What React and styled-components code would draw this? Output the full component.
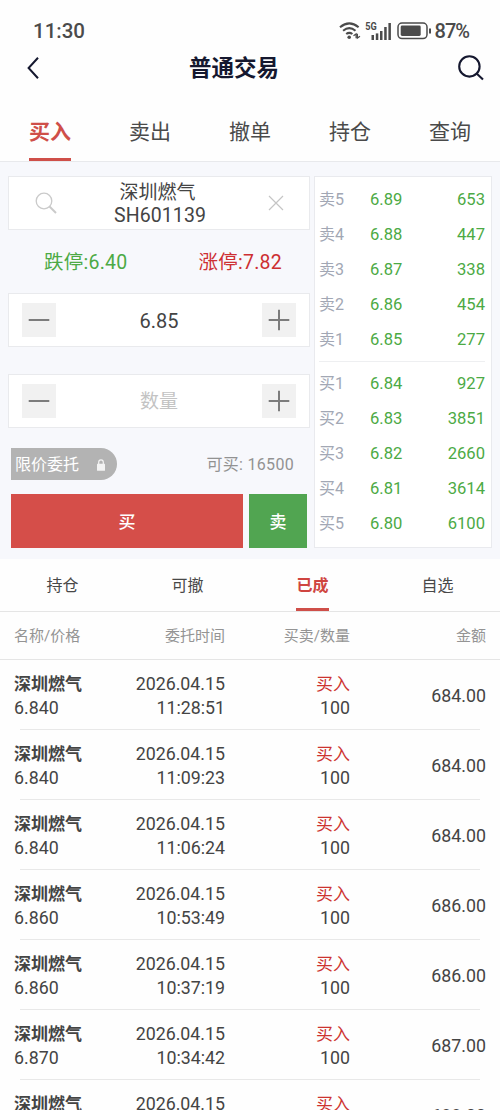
import React, { useState } from "react";
import styled, { createGlobalStyle } from "styled-components";

const GlobalStyle = createGlobalStyle`
  * { box-sizing: border-box; }
  body {
    margin: 0;
    background: #fff;
    color: #444;
    font-family: Roboto, "Noto Sans CJK SC", sans-serif;
  }
  button {
    border: 0;
    padding: 0;
    background: none;
    color: inherit;
    font: inherit;
  }
`;

const Screen = styled.div`
  width: 500px;
  height: 1110px;
  overflow: hidden;
  background: #fefefe;
`;

const StatusBar = styled.div`
  display: flex;
  align-items: center;
  justify-content: space-between;
  height: 46px;
  padding: 15px 31px 0 33px;
  font-size: 20px;
  line-height: 30px;
  font-weight: 500;
  color: #4b4b4b;
`;

const Clock = styled.span`
  font-size: 20.5px;
`;

const StatusIcons = styled.div`
  display: flex;
  align-items: center;
`;

const Percent = styled.span`
  margin-left: 3px;
  font-size: 20px;
  letter-spacing: -1px;
`;

const Header = styled.header`
  display: grid;
  grid-template-columns: 60px 348px 1fr;
  align-items: center;
  height: 44px;
  padding: 0 16px 0 0;
  color: #15182f;
`;

const HeaderButton = styled.button`
  display: flex;
  justify-content: flex-end;
  padding-right: ${props => (props.$back ? 18 : 0)}px;
`;

const Title = styled.h1`
  margin: 0;
  padding-top: 1px;
  text-align: center;
  font-size: 22.5px;
  line-height: 33px;
  font-weight: 700;
`;

const MainTabs = styled.nav`
  display: grid;
  grid-template-columns: repeat(5, 100px);
  height: 72px;
  border-bottom: 1px solid #e8e9ec;
`;

const MainTab = styled.button`
  justify-self: center;
  height: 71px;
  padding-top: 25px;
  border-bottom: 3px solid ${props => (props.$active ? "#cf4f49" : "transparent")};
  color: ${props => (props.$active ? "#cf4f49" : "#4a4a4a")};
  font-size: 21px;
  line-height: 34px;
  font-weight: ${props => (props.$active ? 700 : 400)};
  display: flex;
  align-items: flex-start;
`;

const Trade = styled.section`
  display: flex;
  gap: 4px;
  height: 397px;
  padding: 14px 8px 11px;
  background: #f7f8fc;
`;

const Form = styled.div`
  width: 302px;
`;

const Field = styled.div`
  display: flex;
  align-items: center;
  justify-content: space-between;
  height: 54px;
  margin-bottom: ${props => props.$gap || 0}px;
  padding: ${props => props.$pad || "0 13px"};
  border: 1px solid #e9eaed;
  background: #fff;
`;

const Stock = styled.div`
  display: flex;
  flex-direction: column;
  align-items: center;
  margin-right: 5px;
  padding-top: 1px;
  font-size: 19px;
  line-height: 23px;
`;

const StockName = styled.span`
  margin-right: 5px;
`;

const Code = styled.div`
  font-size: 19.5px;
  letter-spacing: 0.1px;
`;

const Limits = styled.div`
  display: flex;
  justify-content: space-between;
  height: 63px;
  padding: 0 28px 0 36px;
  font-size: 19.5px;
  line-height: 66px;
  letter-spacing: 0.25px;
`;

const Tone = styled.span`
  color: ${props => (props.$up ? "#cd2f32" : "#4caa45")};
`;

const Step = styled.button`
  display: flex;
  align-items: center;
  justify-content: center;
  width: 34px;
  height: 34px;
  background: #f1f1f1;
`;

const Value = styled.span`
  padding-top: 2px;
  font-size: ${props => (props.$empty ? 19 : 20)}px;
  line-height: ${props => (props.$empty ? 28 : 30)}px;
  color: ${props => (props.$empty ? "#c3c3c3" : "#444")};
`;

const OrderLine = styled.div`
  display: flex;
  align-items: center;
  justify-content: space-between;
  height: 32px;
  margin: 20px 16px 14px 3px;
  font-size: 16px;
  line-height: 34px;
  color: #929292;
`;

const OrderType = styled.div`
  display: flex;
  align-items: center;
  justify-content: space-between;
  width: 106px;
  height: 32px;
  padding: 1px 12px 0 4px;
  border-radius: 0 16px 16px 0;
  background: #b3b3b3;
  color: #fff;
`;

const Available = styled.span`
  padding-top: 1px;
  font-size: 16px;
  letter-spacing: 0.3px;
`;

const Actions = styled.div`
  display: grid;
  grid-template-columns: 232px 58px;
  gap: 6px;
  margin-left: 3px;
`;

const Action = styled.button`
  height: 54px;
  padding-top: 2px;
  background: ${props => (props.$buy ? "#d54e49" : "#51a551")};
  color: #fff;
  font-size: 17px;
  line-height: 52px;
  font-weight: 500;
`;

const Book = styled.div`
  width: 178px;
  height: 372px;
  padding: 5px 6px 0 4px;
  border: 1px solid #e9eaee;
  background: #fff;
`;

const Quote = styled.div`
  display: grid;
  grid-template-columns: 51px 50px 1fr;
  height: 35px;
  line-height: 35px;
  font-size: 16.6px;
  color: #4caa45;
`;

const Level = styled.span`
  color: #a2a7b4;
  font-size: 16px;
`;

const Volume = styled.span`
  text-align: right;
`;

const BookRule = styled.div`
  height: 1px;
  margin: 4px 0;
  background: #eeeff1;
`;

const SubTabs = styled.nav`
  display: grid;
  grid-template-columns: repeat(4, 125px);
  height: 53px;
  border-bottom: 1px solid #e5e5e5;
`;

const SubTab = styled.button`
  display: flex;
  justify-self: center;
  height: 52px;
  padding-top: 14px;
  border-bottom: 3px solid ${props => (props.$active ? "#cf4f49" : "transparent")};
  color: ${props => (props.$active ? "#cf4540" : "#484848")};
  font-size: 16px;
  line-height: 26px;
  font-weight: ${props => (props.$active ? 700 : 400)};
`;

const Columns = styled.div`
  display: grid;
  grid-template-columns: 100px 111px 125px 136px;
  align-items: center;
  padding: 0 14px;
  text-align: right;
`;

const TableHead = styled(Columns)`
  height: 48px;
  padding-top: 1px;
  border-bottom: 1px solid #e5e5e5;
  color: #949494;
  font-size: 15px;
  line-height: 46px;
`;

const Row = styled(Columns)`
  height: 69px;
  padding-top: 2px;
  font-size: 17.8px;
  line-height: 24px;
`;

const RowRule = styled.div`
  height: 1px;
  margin: 0 20px;
  background: #e8e8e8;
`;

const Cell = styled.div`
  text-align: ${props => (props.$left ? "left" : "right")};
`;

const Name = styled.div`
  font-size: 17px;
  font-weight: 700;
`;

const Side = styled.div`
  color: #cd3430;
  font-size: 17px;
`;

const WifiIcon = () => (
  <svg width="22" height="18" viewBox="0 0 22 18" fill="none" stroke="#4b4b4b" strokeWidth="2.1">
    <path d="M1 5.2Q10.3-2.4 19.6 5.2" />
    <path d="M4.1 8.7Q10.3 3.7 16.5 8.7" />
    <path d="M7.2 12Q10.3 9.6 13.4 12" />
    <circle cx="10.2" cy="15.2" r="1.8" fill="#4b4b4b" stroke="none" />
    <path d="M14.5 13.8l2.6-1.8v4.2M21 14.2l-2.6 1.8v-4.2" strokeWidth="1.2" />
  </svg>
);

const SignalIcon = () => (
  <svg width="28" height="20" viewBox="0 0 28 20" fill="#4b4b4b" style={{ marginLeft: 4 }}>
    <text x="0.2" y="9.3" fontSize="10.5" fontWeight="700" textLength="11.5" lengthAdjust="spacingAndGlyphs">5G</text>
    <rect x="6.5" y="14" width="2.5" height="5" />
    <rect x="10.8" y="12.4" width="2.5" height="6.6" />
    <rect x="15" y="10" width="2.5" height="9" />
    <rect x="19.2" y="6" width="2.5" height="13" />
    <rect x="23.4" y="2" width="2.5" height="17" />
  </svg>
);

const BatteryIcon = () => (
  <svg width="35" height="18" viewBox="0 0 35 18" fill="none" style={{ marginLeft: 4 }}>
    <rect x="1" y="1" width="29" height="15.6" rx="4" stroke="#4b4b4b" strokeWidth="1.5" />
    <rect x="3.7" y="3.6" width="20" height="10.4" rx="1.4" fill="#4b4b4b" />
    <path d="M33 6.5v5" stroke="#4b4b4b" strokeWidth="2" />
  </svg>
);

const BackIcon = () => (
  <svg width="18" height="24" viewBox="0 0 18 24" fill="none" stroke="#15182f" strokeWidth="2">
    <path d="M14 1.8L4.6 12L14 22.2" />
  </svg>
);

const SearchIcon = () => (
  <svg width="26" height="26" viewBox="0 0 26 26" fill="none" stroke="#15182f" strokeWidth="2.1">
    <circle cx="11.4" cy="11.4" r="10.2" />
    <path d="M18.6 18.4L25 24.4" />
  </svg>
);

const LensIcon = () => (
  <svg width="22" height="22" viewBox="0 0 22 22" fill="none" stroke="#cacaca" strokeWidth="1.3">
    <circle cx="9" cy="9" r="7.8" />
    <path d="M14.5 14.5L21 21" strokeWidth="2" />
  </svg>
);

const ClearIcon = () => (
  <svg width="16" height="16" viewBox="0 0 16 16" stroke="#c5c5c5" strokeWidth="1.2">
    <path d="M1 1l14 14M15 1L1 15" />
  </svg>
);

const StepIcon = ({ plus }) => (
  <svg width="22" height="22" viewBox="0 0 22 22" stroke="#7c7c7c" strokeWidth="2">
    <path d={plus ? "M.7 11h20.6M11 .7v20.6" : "M.7 11h20.6"} />
  </svg>
);

const LockIcon = () => (
  <svg width="8" height="12" viewBox="0 0 8 12" fill="#f3f3f3">
    <rect y="4.7" width="8" height="7" rx=".5" />
    <path d="M1.7 5V3.2a2.3 2.3 0 0 1 4.6 0V5" fill="none" stroke="#f3f3f3" strokeWidth="1.2" />
  </svg>
);

const mainTabs = ["买入", "卖出", "撤单", "持仓", "查询"];
const subTabs = ["持仓", "可撤", "已成", "自选"];

const asks = [
  ["卖5", "6.89", 653],
  ["卖4", "6.88", 447],
  ["卖3", "6.87", 338],
  ["卖2", "6.86", 454],
  ["卖1", "6.85", 277],
];

const bids = [
  ["买1", "6.84", 927],
  ["买2", "6.83", 3851],
  ["买3", "6.82", 2660],
  ["买4", "6.81", 3614],
  ["买5", "6.80", 6100],
];

const deals = [
  { time: "11:28:51", price: "6.840", amount: "684.00" },
  { time: "11:09:23", price: "6.840", amount: "684.00" },
  { time: "11:06:24", price: "6.840", amount: "684.00" },
  { time: "10:53:49", price: "6.860", amount: "686.00" },
  { time: "10:37:19", price: "6.860", amount: "686.00" },
  { time: "10:34:42", price: "6.870", amount: "687.00" },
  { time: "10:31:08", price: "6.880", amount: "688.00" },
];

const Quotes = ({ items }) =>
  items.map(([level, price, volume]) => (
    <Quote key={level}>
      <Level>{level}</Level>
      <span>{price}</span>
      <Volume>{volume}</Volume>
    </Quote>
  ));

export default function App() {
  const [tab, setTab] = useState("买入");
  const [subTab, setSubTab] = useState("已成");

  return (
    <Screen>
      <GlobalStyle />
      <StatusBar>
        <Clock>11:30</Clock>
        <StatusIcons>
          <WifiIcon />
          <SignalIcon />
          <BatteryIcon />
          <Percent>87%</Percent>
        </StatusIcons>
      </StatusBar>
      <Header>
        <HeaderButton $back><BackIcon /></HeaderButton>
        <Title>普通交易</Title>
        <HeaderButton><SearchIcon /></HeaderButton>
      </Header>
      <MainTabs>
        {mainTabs.map(name => (
          <MainTab key={name} $active={name === tab} onClick={() => setTab(name)}>
            {name}
          </MainTab>
        ))}
      </MainTabs>

      <Trade>
        <Form>
          <Field $pad="0 25px 0 26px">
            <LensIcon />
            <Stock>
              <StockName>深圳燃气</StockName>
              <Code>SH601139</Code>
            </Stock>
            <ClearIcon />
          </Field>
          <Limits>
            <Tone>跌停:6.40</Tone>
            <Tone $up>涨停:7.82</Tone>
          </Limits>
          <Field $gap={27}>
            <Step><StepIcon /></Step>
            <Value>6.85</Value>
            <Step><StepIcon plus /></Step>
          </Field>
          <Field>
            <Step><StepIcon /></Step>
            <Value $empty>数量</Value>
            <Step><StepIcon plus /></Step>
          </Field>
          <OrderLine>
            <OrderType>
              限价委托
              <LockIcon />
            </OrderType>
            <Available>可买: 16500</Available>
          </OrderLine>
          <Actions>
            <Action $buy>买</Action>
            <Action>卖</Action>
          </Actions>
        </Form>
        <Book>
          <Quotes items={asks} />
          <BookRule />
          <Quotes items={bids} />
        </Book>
      </Trade>

      <SubTabs>
        {subTabs.map(name => (
          <SubTab key={name} $active={name === subTab} onClick={() => setSubTab(name)}>
            {name}
          </SubTab>
        ))}
      </SubTabs>
      <TableHead>
        <Cell $left>名称/价格</Cell>
        <Cell>委托时间</Cell>
        <Cell>买卖/数量</Cell>
        <Cell>金额</Cell>
      </TableHead>
      {deals.map(deal => (
        <React.Fragment key={deal.time}>
          <Row>
            <Cell $left>
              <Name>深圳燃气</Name>
              {deal.price}
            </Cell>
            <Cell>
              2026.04.15
              <br />
              {deal.time}
            </Cell>
            <Cell>
              <Side>买入</Side>
              100
            </Cell>
            <Cell>{deal.amount}</Cell>
          </Row>
          <RowRule />
        </React.Fragment>
      ))}
    </Screen>
  );
}
